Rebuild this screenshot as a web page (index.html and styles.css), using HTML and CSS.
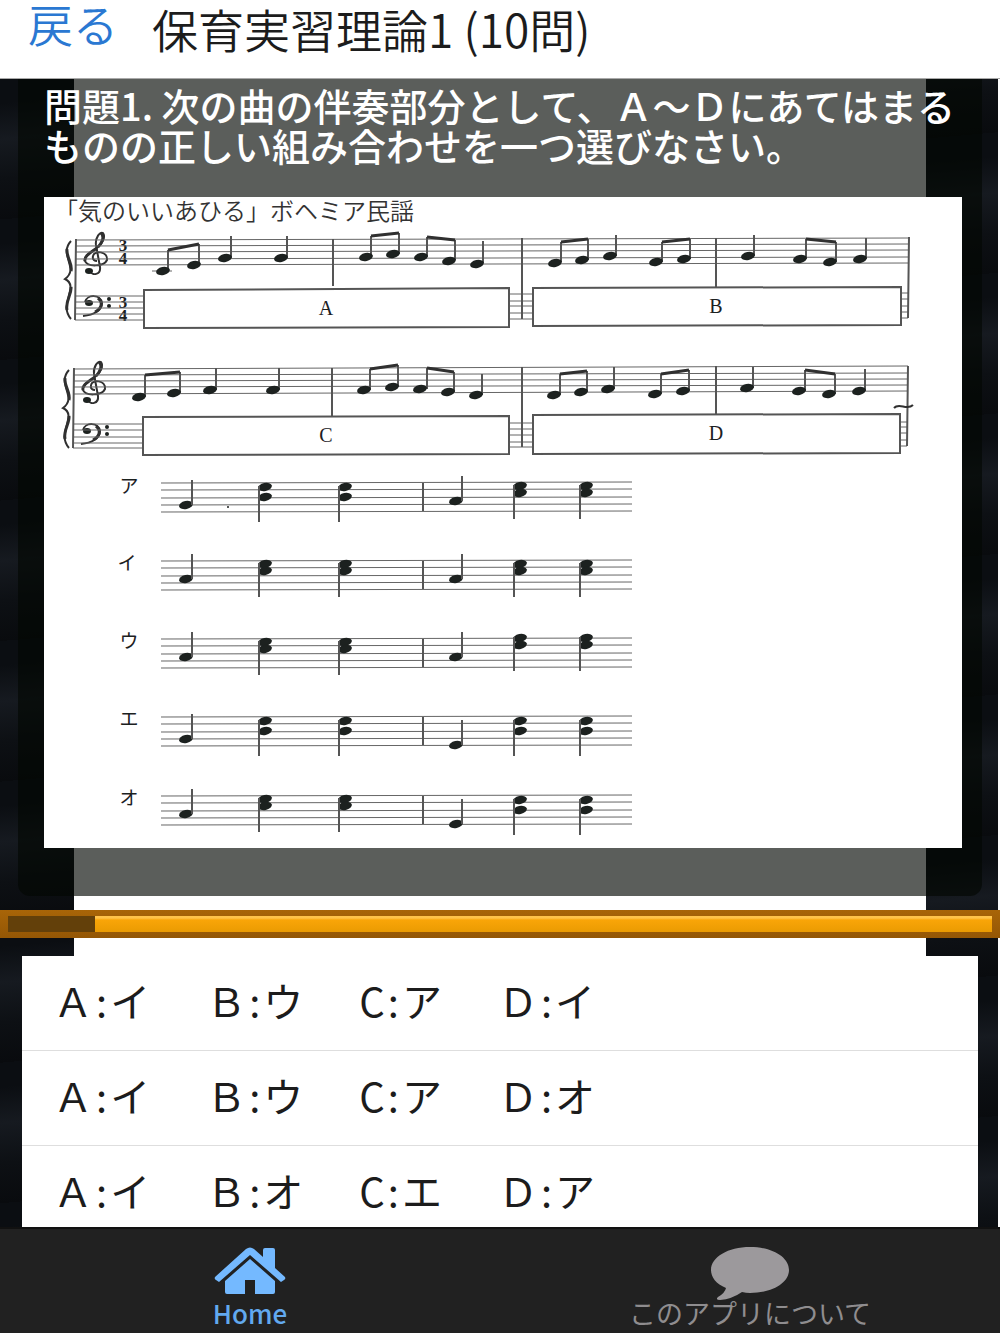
FILE: index.html
```html
<!DOCTYPE html>
<html lang="ja">
<head>
<meta charset="utf-8">
<meta name="viewport" content="width=device-width, initial-scale=1">
<title>保育実習理論1</title>
<link rel="stylesheet" href="styles.css">
</head>
<body>
<header class="topbar">
  <a class="back" href="#">戻る</a>
  <h1 class="title">保育実習理論1 (10問)</h1>
</header>

<main class="stage">
  <section class="panel">
    <p class="question">問題1. 次の曲の伴奏部分として、Ａ～Ｄにあてはまるものの正しい組み合わせを一つ選びなさい。</p>
    <svg class="score" viewBox="44 197 918 651" role="img" aria-label="「気のいいあひる」の楽譜">
      <defs>
        <ellipse id="h" rx="7" ry="4" transform="rotate(-12)"/>
        <g id="treble">
          <path class="ink" d="M90 271C92 276 101 275 100 267L96 245C95 238 100 231 103 233C106 237 102 244 97 248C90 253 84 256 85 261C87 267 104 267 107 260C108 251 94 250 93 256C92 260 95 261 97 261"/>
          <path class="thick" d="M97 248C90 253 84 256 85 261M101 233C105 237 102 243 98 247"/>
          <ellipse cx="89" cy="271" rx="4" ry="3"/>
        </g>
        <g id="bass">
          <path class="ink" d="M85 302C87 294 101 294 102 303C102 310 94 315 83 316"/>
          <path class="thick" d="M98 298C104 303 101 309 95 312"/>
          <ellipse cx="89" cy="303" rx="4" ry="3"/>
          <circle cx="109" cy="299" r="2"/><circle cx="109" cy="306" r="2"/>
        </g>
        <g id="brace">
          <path class="ink" d="M71 241C58 255 80 268 65 279C80 286 58 305 71 319"/>
          <path class="thick" d="M67 249C66 257 73 264 71 271M71 287C72 294 65 301 67 310"/>
        </g>
        <path id="lines" class="staff" d="M161 483L632 482M161 490L632 489M161 498L632 497M161 505L632 504M161 512L632 511"/>
        <path id="divide" class="bar" d="M423 483V511"/>
        <g id="note"><use href="#h" y="501"/><path class="stem" d="M6 501V476"/></g>
        <g id="wide"><use href="#h" y="487"/><use href="#h" y="497"/><path class="stem" d="M-6 486V522"/></g>
        <g id="close"><use href="#h" y="486"/><use href="#h" y="493"/><path class="stem" d="M-6 485V519"/></g>
      </defs>

      <text class="song" x="54" y="220">「気のいいあひる」ボヘミア民謡</text>

      <g>
        <use href="#brace"/><use href="#treble"/><use href="#bass"/>
        <text class="meter" x="123" y="251">3</text><text class="meter" x="123" y="264">4</text>
        <text class="meter" x="123" y="308">3</text><text class="meter" x="123" y="321">4</text>
        <path class="staff" d="M76 240L909 238M76 246L909 244M76 252L909 250M76 259L909 257M76 265L909 263M75 296H145M75 302H145M75 308H145M75 314H145M75 320H145M509 294H533M509 301H533M509 306H533M509 313H533M509 319H533M901 293H908M901 299H908M901 306H908M901 312H908M901 318H908M152 271H172"/>
        <path class="box" d="M144 290L509 288V327L144 328ZM533 288L901 287V325L533 326Z"/>
        <path class="bar" d="M76 239L75 320M333 239V286M522 238V319M716 238V287M909 237L908 318"/>
        <path class="stem" d="M168 271V250M199 265V244M231 258V236M287 258V236M371 257V236M399 254V233M427 257V237M455 260V240M483 263V241M561 262V242M588 260V239M616 256V235M662 262V242M690 259V239M754 256V235M806 259V239M836 262V242M866 259V238"/>
        <path class="beam" d="M168 250L199 244M371 236L399 233M427 237L455 240M561 242L588 239M662 242L690 239M806 239L836 242"/>
        <use href="#h" x="163" y="271"/><use href="#h" x="194" y="265"/><use href="#h" x="225" y="258"/><use href="#h" x="281" y="258"/>
        <use href="#h" x="366" y="257"/><use href="#h" x="393" y="254"/><use href="#h" x="421" y="257"/><use href="#h" x="449" y="261"/><use href="#h" x="477" y="264"/>
        <use href="#h" x="555" y="263"/><use href="#h" x="582" y="260"/><use href="#h" x="610" y="256"/><use href="#h" x="656" y="262"/><use href="#h" x="684" y="259"/>
        <use href="#h" x="748" y="256"/><use href="#h" x="800" y="259"/><use href="#h" x="830" y="262"/><use href="#h" x="860" y="259"/>
        <text class="part" x="326" y="315">A</text><text class="part" x="716" y="313">B</text>
      </g>

      <g>
        <use href="#brace" x="-2" y="129"/><use href="#treble" x="-2" y="129"/><use href="#bass" x="-2" y="128"/>
        <path class="staff" d="M74 369L908 366M74 375L908 373M74 381L908 379M74 387L908 385M74 394L908 391M73 424H143M73 430H143M73 437H143M73 443H143M73 448H143M509 423H533M509 429H533M509 435H533M509 442H533M509 447H533M900 422H907M900 427H907M900 433H907M900 440H907M900 446H907"/>
        <path class="box" d="M143 417L509 416V454L143 455ZM533 415L900 414V453L533 454Z"/>
        <path class="bar" d="M74 368L73 448M332 368V416M522 367V447M716 366V414M908 366L907 446"/>
        <path class="stem" d="M145 397V375M180 393V372M216 390V368M279 390V368M370 390V369M398 387V365M427 389V368M454 392V372M482 395V374M560 395V374M587 392V371M614 389V367M661 394V374M689 391V370M753 388V367M805 391V370M835 394V374M865 391V369"/>
        <path class="beam" d="M145 375L180 372M370 369L398 365M427 368L454 372M560 374L587 371M661 374L689 370M805 370L835 374"/>
        <use href="#h" x="139" y="397"/><use href="#h" x="174" y="393"/><use href="#h" x="210" y="390"/><use href="#h" x="273" y="390"/>
        <use href="#h" x="364" y="390"/><use href="#h" x="392" y="387"/><use href="#h" x="420" y="389"/><use href="#h" x="448" y="392"/><use href="#h" x="476" y="395"/>
        <use href="#h" x="554" y="395"/><use href="#h" x="581" y="392"/><use href="#h" x="608" y="389"/><use href="#h" x="655" y="394"/><use href="#h" x="683" y="391"/>
        <use href="#h" x="747" y="388"/><use href="#h" x="799" y="391"/><use href="#h" x="829" y="394"/><use href="#h" x="859" y="391"/>
        <path class="ink" d="M894 408C899 402 907 411 913 405"/>
        <text class="part" x="326" y="442">C</text><text class="part" x="716" y="440">D</text>
      </g>

      <g>
        <text class="kana" x="129" y="493">ア</text><use href="#lines"/><use href="#divide"/>
        <use href="#note" x="186" y="4"/><use href="#wide" x="265"/><use href="#wide" x="345"/>
        <use href="#note" x="456"/><use href="#close" x="520"/><use href="#close" x="586"/>
        <circle cx="228" cy="507" r="1"/>
      </g>
      <g transform="translate(0 78)">
        <text class="kana" x="127" y="492">イ</text><use href="#lines"/><use href="#divide"/>
        <use href="#note" x="186"/><use href="#close" x="265"/><use href="#close" x="345"/>
        <use href="#note" x="456"/><use href="#close" x="520"/><use href="#close" x="586"/>
      </g>
      <g transform="translate(0 156)">
        <text class="kana" x="129" y="492">ウ</text><use href="#lines"/><use href="#divide"/>
        <use href="#note" x="186"/><use href="#close" x="265"/><use href="#close" x="345"/>
        <use href="#note" x="456"/><use href="#close" x="520" y="-4"/><use href="#close" x="586" y="-4"/>
      </g>
      <g transform="translate(0 234)">
        <text class="kana" x="129" y="492">エ</text><use href="#lines"/><use href="#divide"/>
        <use href="#note" x="186" y="4"/><use href="#wide" x="265"/><use href="#wide" x="345"/>
        <use href="#note" x="456" y="10"/><use href="#wide" x="520"/><use href="#wide" x="586"/>
      </g>
      <g transform="translate(0 313)">
        <text class="kana" x="129" y="492">オ</text><use href="#lines"/><use href="#divide"/>
        <use href="#note" x="186"/><use href="#close" x="265"/><use href="#close" x="345"/>
        <use href="#note" x="456" y="10"/><use href="#wide" x="520"/><use href="#wide" x="586"/>
      </g>
    </svg>
  </section>

  <progress class="timer" value="88" max="1000" aria-label="経過時間"></progress>

  <div class="answers">
    <button class="answer" type="button"><span>Ａ<i>:</i>イ</span><span>Ｂ<i>:</i>ウ</span><span>C<i>:</i>ア</span><span>Ｄ<i>:</i>イ</span></button>
    <button class="answer" type="button"><span>Ａ<i>:</i>イ</span><span>Ｂ<i>:</i>ウ</span><span>C<i>:</i>ア</span><span>Ｄ<i>:</i>オ</span></button>
    <button class="answer" type="button"><span>Ａ<i>:</i>イ</span><span>Ｂ<i>:</i>オ</span><span>C<i>:</i>エ</span><span>Ｄ<i>:</i>ア</span></button>
  </div>
</main>

<nav class="tabs">
  <a class="tab tab-active" href="#">
    <svg class="tab-icon" viewBox="0 0 80 54" aria-hidden="true">
      <path d="M5 31L36 3Q40 0 44 3L53 11V4Q53 2 55 2H63Q65 2 65 4V22L75 31Q76 33 74 34L71 36L40 9L9 36L6 34Q4 33 5 31Z"/>
      <path d="M40 13L65 35V46Q65 48 63 48H45V34H35V48H17Q15 48 15 46V35Z"/>
    </svg>
    Home
  </a>
  <a class="tab" href="#">
    <svg class="tab-icon" viewBox="0 0 80 54" aria-hidden="true">
      <path d="M40 1C62 1 79 11 79 24S62 47 40 47Q36 47 32 46Q22 53 10 54Q5 54 8 51Q15 47 16 42C6 38 1 31 1 24C1 11 18 1 40 1Z"/>
    </svg>
    このアプリについて
  </a>
</nav>
</body>
</html>
```
FILE: styles.css
```css
* {
  box-sizing: border-box;
}

body {
  display: flex;
  flex-direction: column;
  height: 100vh;
  margin: 0;
  background: #fff;
  color: #1c1c1c;
  font-family: "Noto Sans CJK JP", "Noto Sans", sans-serif;
}

.topbar {
  display: flex;
  flex: none;
  align-items: flex-start;
  gap: 34px;
  height: 79px;
  padding: 0 28px;
  border-bottom: 1px solid #a9a9a9;
}

.back {
  color: #2a78d2;
  font-size: 45px;
  font-weight: 350;
  line-height: 48px;
  text-decoration: none;
}

.title {
  margin: 0;
  font-size: 46px;
  font-weight: 350;
  line-height: 56px;
}

.stage {
  display: flex;
  flex: 1 1 0;
  flex-direction: column;
  min-height: 0;
  overflow: hidden;
  background:
    linear-gradient(90deg, transparent 7.4%, #fff 7.4%, #fff 92.6%, transparent 92.6%),
    linear-gradient(90deg, transparent calc(100% - 2px), #fff 0),
    repeating-linear-gradient(175deg, #0b0e12 0 24px, #161a20 60px, #0d1014 100px, #090b0e 140px);
}

.panel {
  flex: none;
  margin: 0 18px;
  padding: 6px 20px 48px 26px;
  border-radius: 0 0 12px 12px;
  background: rgba(3, 7, 3, 0.65);
}

.question {
  margin: 0 0 32px;
  color: #fff;
  font-size: 38px;
  font-weight: 500;
  line-height: 40px;
}

.score {
  display: block;
  width: 100%;
  overflow: visible;
  background: #fff;
  fill: #1c211f;
}

.staff,
.stem,
.bar,
.box,
.ink,
.thick,
.beam {
  fill: none;
  stroke: #303030;
}

.staff {
  stroke: #666;
}

.box {
  fill: #fff;
}

.stem,
.box,
.ink,
.bar {
  stroke-width: 2px;
}

.stem,
.bar,
.box {
  stroke: #555;
}

.thick,
.beam {
  stroke-width: 3px;
}

.song {
  fill: #333;
  font-size: 24px;
  font-weight: 350;
}

.part,
.meter {
  font-family: "Liberation Serif", serif;
  font-size: 20px;
  text-anchor: middle;
}

.meter {
  font-size: 17px;
  font-weight: 700;
}

.kana {
  font-size: 19px;
  text-anchor: middle;
}

.timer {
  flex: none;
  width: 100%;
  height: 28px;
  margin: 14px 0 18px;
  padding: 6px 8px;
  border: 0;
  background: linear-gradient(#a86508, #945705);
  appearance: none;
}

.timer::-webkit-progress-bar {
  background: linear-gradient(#ffc34a 0 2px, #f9a508 4px, #ea9b02);
}

.timer::-webkit-progress-value {
  background: #63400a;
}

.answers {
  flex: 1 1 0;
  min-height: 0;
  margin: 0 22px;
  overflow: hidden;
  background: #fff;
}

.answer {
  display: flex;
  align-items: center;
  gap: 56px;
  width: 100%;
  height: 95px;
  padding: 0 31px 6px;
  border: 0;
  border-bottom: 1px solid #dedede;
  background: #fff;
  color: #1c1c1c;
  font: inherit;
  font-size: 40px;
  text-align: left;
}

.answer i {
  padding: 0 3px;
  font-style: normal;
}

.tabs {
  display: flex;
  flex: none;
  height: 106px;
  border-top: 2px solid #111;
  background: #212121;
}

.tab {
  display: flex;
  flex: 1;
  flex-direction: column;
  align-items: center;
  padding-top: 17px;
  color: #8f8d8f;
  font-size: 27px;
  line-height: 26px;
  text-decoration: none;
}

.tab-active {
  color: #62a9ef;
  font-size: 26px;
  font-weight: 500;
}

.tab-icon {
  width: 80px;
  height: 54px;
  fill: #9c999c;
}

.tab-active .tab-icon {
  fill: #74b9ff;
}
```
